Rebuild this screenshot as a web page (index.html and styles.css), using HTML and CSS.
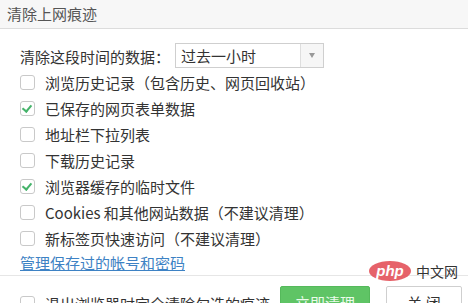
FILE: index.html
```html
<!DOCTYPE html>
<html>
<head>
    <title>清除上网痕迹</title>
    <link rel="stylesheet" href="styles.css">
</head>
<body>
    <div class="dialog">
        <div class="titlebar">清除上网痕迹</div>

        <div class="content">
            <div class="range-row">
                <span class="range-label">清除这段时间的数据：</span>
                <div class="select">
                    <span class="select-value">过去一小时</span>
                    <span class="select-arrow"><i></i></span>
                </div>
            </div>

            <label class="check-row"><span class="box"></span>浏览历史记录（包含历史、网页回收站）</label>
            <label class="check-row"><span class="box checked"></span>已保存的网页表单数据</label>
            <label class="check-row"><span class="box"></span>地址栏下拉列表</label>
            <label class="check-row"><span class="box"></span>下载历史记录</label>
            <label class="check-row"><span class="box checked"></span>浏览器缓存的临时文件</label>
            <label class="check-row"><span class="box"></span>Cookies 和其他网站数据（不建议清理）</label>
            <label class="check-row"><span class="box"></span>新标签页快速访问（不建议清理）</label>

            <div class="link-row"><a href="#" class="link">管理保存过的帐号和密码</a></div>
        </div>

        <div class="footer">
            <label class="check-row exit-row"><span class="box"></span>退出浏览器时完全清除勾选的痕迹</label>
            <button class="btn btn-primary">立即清理</button>
            <button class="btn btn-close">关 闭</button>
        </div>

        <!-- watermark -->
        <div class="watermark">
            <span class="wm-logo">php</span>
            <span class="wm-text">中文网</span>
        </div>
    </div>
</body>
</html>
```

FILE: styles.css
```css
body {
    margin: 0;
    background: #fff;
    font-family: "Noto Sans CJK SC", "Noto Sans", sans-serif;
    color: #333;
    overflow: hidden;
}
.dialog {
    position: relative;
    width: 468px;
    height: 303px;
    overflow: hidden;
}
.titlebar {
    height: 28px;
    line-height: 28px;
    padding-left: 7px;
    font-size: 15px;
    color: #555;
    background: #f7f7f7;
    border-bottom: 1px solid #dcdcdc;
}
.content {
    padding: 14px 20px 0 20px;
}
.range-row {
    display: flex;
    align-items: center;
    height: 26px;
    font-size: 15px;
}
.range-label {
    width: 155px;
}
.select {
    display: flex;
    width: 147px;
    height: 23px;
    border: 1px solid #cfcfcf;
    margin-top: -1px;
}
.select-value {
    flex: 1;
    padding-left: 5px;
    line-height: 23px;
    font-size: 15px;
}
.select-arrow {
    width: 22px;
    border-left: 1px solid #dedede;
    background: #f6f6f6;
    display: flex;
    align-items: center;
    justify-content: center;
}
.select-arrow i {
    width: 0;
    height: 0;
    border-left: 3px solid transparent;
    border-right: 3px solid transparent;
    border-top: 5px solid #999;
}
.check-row {
    display: flex;
    align-items: center;
    height: 26px;
    font-size: 15px;
    color: #333;
    white-space: nowrap;
}
.box {
    position: relative;
    flex-shrink: 0;
    width: 13px;
    height: 13px;
    border: 1px solid #c9c9c9;
    border-radius: 3px;
    margin-right: 10px;
    background: #fff;
}
.box.checked::after {
    content: "";
    position: absolute;
    left: 3px;
    top: 1px;
    width: 4px;
    height: 7px;
    border-right: 2px solid #45b36a;
    border-bottom: 2px solid #45b36a;
    transform: rotate(40deg);
}
.link-row {
    height: 24px;
    line-height: 24px;
    font-size: 15px;
}
.link {
    color: #3d82c4;
    text-decoration: underline;
}
.footer {
    display: flex;
    align-items: center;
    border-top: 1px solid #e6e6e6;
    padding: 10px 0 0 20px;
}
.exit-row {
    flex-shrink: 0;
    align-self: flex-start;
    margin-top: 4px;
}
.btn {
    flex-shrink: 0;
    height: 32px;
    font-family: inherit;
    font-size: 15px;
    border-radius: 2px;
    padding: 0;
    align-self: flex-start;
}
.btn-primary {
    width: 90px;
    margin-left: 10px;
    background: #5fc465;
    color: #eafbea;
    border: 1px solid #55b95b;
}
.btn-close {
    width: 76px;
    margin-left: 16px;
    background: #fff;
    color: #333;
    border: 1px solid #cfcfcf;
}
.watermark {
    position: absolute;
    left: 369px;
    top: 261px;
    display: flex;
    align-items: center;
}
.wm-logo {
    width: 42px;
    height: 20px;
    line-height: 19px;
    border-radius: 50%;
    background: #e4525a;
    color: #fff;
    font-family: "Liberation Sans", sans-serif;
    font-style: italic;
    font-weight: bold;
    font-size: 15px;
    text-align: center;
    opacity: 0.9;
}
.wm-text {
    margin-left: 5px;
    font-size: 14px;
    color: #333;
}
```
